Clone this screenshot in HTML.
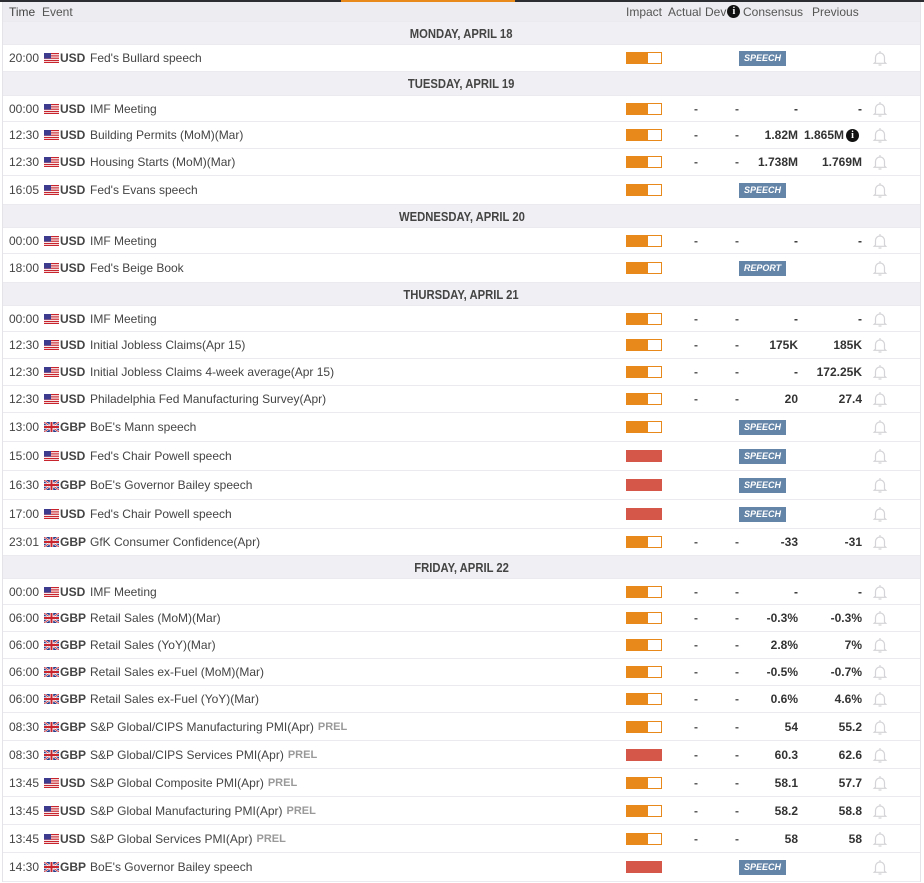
<!DOCTYPE html>
<html><head><meta charset="utf-8"><style>
*{margin:0;padding:0;box-sizing:border-box}
body{width:924px;height:883px;background:#fff;font-family:"Liberation Sans",Arial,sans-serif;font-size:12px;color:#444;position:relative;overflow:hidden}
.top{position:absolute;left:0;top:0;width:924px;height:2px;background:#2b2d33}
.top i{position:absolute;left:341px;width:174px;height:2px;background:#e8891c}
.tbl{position:absolute;left:2px;top:2px;width:919px;border-left:1px solid #e4e4e8;border-right:1px solid #e4e4e8}
.r{position:relative;border-bottom:1px solid #ebebef;background:#fff}
.r>*{position:absolute;top:0;height:100%;display:flex;align-items:center;white-space:nowrap}
.h{background:#ededf1;color:#555}
.d{background:#f0f0f4}
.d>span{left:0;width:100%;justify-content:center;font-weight:bold;color:#444;font-size:12.5px;padding-top:1px}
.d>span>em{font-style:normal;display:inline-block;transform:scaleX(.9)}
.t{left:6px;color:#444}
.f{left:41px}
.c{left:57px;font-weight:bold;color:#444}
.e{left:87px;color:#444}
.e b{color:#999;font-size:11px;margin-left:4px}
.im{left:623px}
.im i{display:block;width:36px;height:12px;border:1px solid #e8891c;background:linear-gradient(90deg,#e8891c 0 21px,#fff 21px)}
.im i.hi{background:#d5574a;border-color:#d5574a}
.a{left:688px;width:10px;justify-content:center;font-weight:bold;color:#555}
.dv{left:729px;width:10px;justify-content:center;font-weight:bold;color:#555}
.cs{right:122px;font-weight:bold;color:#333}
.pv{right:58px;font-weight:bold;color:#333}
.bl{left:869px}
.sp{left:736px}
.sp i{display:block;width:47px;height:15px;background:#6585a8;color:#fff;font-size:9px;font-weight:bold;font-style:italic;text-align:center;line-height:15px}
.inf{display:inline-block;width:13px;height:13px;border-radius:50%;background:#111;color:#fff;font-size:10px;font-weight:bold;text-align:center;line-height:13px;font-family:"Liberation Serif",serif;margin-left:2px}
</style></head><body>
<svg width="0" height="0" style="position:absolute">
<defs>
<symbol id="us" viewBox="0 0 15 10"><rect width="15" height="10" fill="#fff"/><g fill="#c8242d"><rect y="0" width="15" height="1.2"/><rect y="2.3" width="15" height="1.2"/><rect y="4.6" width="15" height="1.2"/><rect y="6.9" width="15" height="1.2"/><rect y="8.9" width="15" height="1.1"/></g><rect width="7" height="5.6" fill="#3c3b8e"/></symbol>
<symbol id="gb" viewBox="0 0 15 10"><rect width="15" height="10" fill="#243c8a"/><path d="M0 0L15 10M15 0L0 10" stroke="#fff" stroke-width="2"/><path d="M0 0L15 10M15 0L0 10" stroke="#c8242d" stroke-width=".8"/><rect x="5.8" width="3.4" height="10" fill="#fff"/><rect y="3.3" width="15" height="3.4" fill="#fff"/><rect x="6.5" width="2" height="10" fill="#c8242d"/><rect y="4" width="15" height="2" fill="#c8242d"/></symbol>
<symbol id="bell" viewBox="0 0 16 16"><path d="M8 1v1.5M3.5 12V7.5a4.5 4.5 0 0 1 9 0V12l1.3 1.3H2.2z M6.5 15h3" fill="none" stroke="#d4d4d8" stroke-width="1.2"/></symbol>
</defs></svg>
<div class="top"><i></i></div>
<div class="tbl">
<div class="r h" style="height:20px"><span class="t">Time</span><span style="left:39px">Event</span><span style="left:623px">Impact</span><span style="left:665px">Actual</span><span style="left:702px">Dev <span class="inf" style="margin-left:1px">i</span></span><span style="left:740px">Consensus</span><span style="left:809px">Previous</span></div>

<div class="r d" style="height:23px"><span><em>MONDAY, APRIL 18</em></span></div>
<div class="r" style="height:27px"><span class="t">20:00</span><span class="f"><svg width="15" height="10"><use href="#us"/></svg></span><span class="c">USD</span><span class="e">Fed's Bullard speech</span><span class="im"><i></i></span><span class="sp"><i>SPEECH</i></span><span class="bl"><svg width="16" height="16"><use href="#bell"/></svg></span></div>

<div class="r d" style="height:24px"><span><em>TUESDAY, APRIL 19</em></span></div>
<div class="r" style="height:26px"><span class="t">00:00</span><span class="f"><svg width="15" height="10"><use href="#us"/></svg></span><span class="c">USD</span><span class="e">IMF Meeting</span><span class="im"><i></i></span><span class="a">-</span><span class="dv">-</span><span class="cs">-</span><span class="pv">-</span><span class="bl"><svg width="16" height="16"><use href="#bell"/></svg></span></div>
<div class="r" style="height:27px"><span class="t">12:30</span><span class="f"><svg width="15" height="10"><use href="#us"/></svg></span><span class="c">USD</span><span class="e">Building Permits (MoM)(Mar)</span><span class="im"><i></i></span><span class="a">-</span><span class="dv">-</span><span class="cs">1.82M</span><span class="pv" style="right:61px">1.865M<span class="inf">i</span></span><span class="bl"><svg width="16" height="16"><use href="#bell"/></svg></span></div>
<div class="r" style="height:27px"><span class="t">12:30</span><span class="f"><svg width="15" height="10"><use href="#us"/></svg></span><span class="c">USD</span><span class="e">Housing Starts (MoM)(Mar)</span><span class="im"><i></i></span><span class="a">-</span><span class="dv">-</span><span class="cs">1.738M</span><span class="pv">1.769M</span><span class="bl"><svg width="16" height="16"><use href="#bell"/></svg></span></div>
<div class="r" style="height:29px"><span class="t">16:05</span><span class="f"><svg width="15" height="10"><use href="#us"/></svg></span><span class="c">USD</span><span class="e">Fed's Evans speech</span><span class="im"><i></i></span><span class="sp"><i>SPEECH</i></span><span class="bl"><svg width="16" height="16"><use href="#bell"/></svg></span></div>

<div class="r d" style="height:23px"><span><em>WEDNESDAY, APRIL 20</em></span></div>
<div class="r" style="height:26px"><span class="t">00:00</span><span class="f"><svg width="15" height="10"><use href="#us"/></svg></span><span class="c">USD</span><span class="e">IMF Meeting</span><span class="im"><i></i></span><span class="a">-</span><span class="dv">-</span><span class="cs">-</span><span class="pv">-</span><span class="bl"><svg width="16" height="16"><use href="#bell"/></svg></span></div>
<div class="r" style="height:29px"><span class="t">18:00</span><span class="f"><svg width="15" height="10"><use href="#us"/></svg></span><span class="c">USD</span><span class="e">Fed's Beige Book</span><span class="im"><i></i></span><span class="sp"><i>REPORT</i></span><span class="bl"><svg width="16" height="16"><use href="#bell"/></svg></span></div>

<div class="r d" style="height:23px"><span><em>THURSDAY, APRIL 21</em></span></div>
<div class="r" style="height:26px"><span class="t">00:00</span><span class="f"><svg width="15" height="10"><use href="#us"/></svg></span><span class="c">USD</span><span class="e">IMF Meeting</span><span class="im"><i></i></span><span class="a">-</span><span class="dv">-</span><span class="cs">-</span><span class="pv">-</span><span class="bl"><svg width="16" height="16"><use href="#bell"/></svg></span></div>
<div class="r" style="height:27px"><span class="t">12:30</span><span class="f"><svg width="15" height="10"><use href="#us"/></svg></span><span class="c">USD</span><span class="e">Initial Jobless Claims(Apr 15)</span><span class="im"><i></i></span><span class="a">-</span><span class="dv">-</span><span class="cs">175K</span><span class="pv">185K</span><span class="bl"><svg width="16" height="16"><use href="#bell"/></svg></span></div>
<div class="r" style="height:27px"><span class="t">12:30</span><span class="f"><svg width="15" height="10"><use href="#us"/></svg></span><span class="c">USD</span><span class="e">Initial Jobless Claims 4-week average(Apr 15)</span><span class="im"><i></i></span><span class="a">-</span><span class="dv">-</span><span class="cs">-</span><span class="pv">172.25K</span><span class="bl"><svg width="16" height="16"><use href="#bell"/></svg></span></div>
<div class="r" style="height:27px"><span class="t">12:30</span><span class="f"><svg width="15" height="10"><use href="#us"/></svg></span><span class="c">USD</span><span class="e">Philadelphia Fed Manufacturing Survey(Apr)</span><span class="im"><i></i></span><span class="a">-</span><span class="dv">-</span><span class="cs">20</span><span class="pv">27.4</span><span class="bl"><svg width="16" height="16"><use href="#bell"/></svg></span></div>
<div class="r" style="height:29px"><span class="t">13:00</span><span class="f"><svg width="15" height="10"><use href="#gb"/></svg></span><span class="c">GBP</span><span class="e">BoE's Mann speech</span><span class="im"><i></i></span><span class="sp"><i>SPEECH</i></span><span class="bl"><svg width="16" height="16"><use href="#bell"/></svg></span></div>
<div class="r" style="height:29px"><span class="t">15:00</span><span class="f"><svg width="15" height="10"><use href="#us"/></svg></span><span class="c">USD</span><span class="e">Fed's Chair Powell speech</span><span class="im"><i class="hi"></i></span><span class="sp"><i>SPEECH</i></span><span class="bl"><svg width="16" height="16"><use href="#bell"/></svg></span></div>
<div class="r" style="height:29px"><span class="t">16:30</span><span class="f"><svg width="15" height="10"><use href="#gb"/></svg></span><span class="c">GBP</span><span class="e">BoE's Governor Bailey speech</span><span class="im"><i class="hi"></i></span><span class="sp"><i>SPEECH</i></span><span class="bl"><svg width="16" height="16"><use href="#bell"/></svg></span></div>
<div class="r" style="height:29px"><span class="t">17:00</span><span class="f"><svg width="15" height="10"><use href="#us"/></svg></span><span class="c">USD</span><span class="e">Fed's Chair Powell speech</span><span class="im"><i class="hi"></i></span><span class="sp"><i>SPEECH</i></span><span class="bl"><svg width="16" height="16"><use href="#bell"/></svg></span></div>
<div class="r" style="height:27px"><span class="t">23:01</span><span class="f"><svg width="15" height="10"><use href="#gb"/></svg></span><span class="c">GBP</span><span class="e">GfK Consumer Confidence(Apr)</span><span class="im"><i></i></span><span class="a">-</span><span class="dv">-</span><span class="cs">-33</span><span class="pv">-31</span><span class="bl"><svg width="16" height="16"><use href="#bell"/></svg></span></div>

<div class="r d" style="height:23px"><span><em>FRIDAY, APRIL 22</em></span></div>
<div class="r" style="height:26px"><span class="t">00:00</span><span class="f"><svg width="15" height="10"><use href="#us"/></svg></span><span class="c">USD</span><span class="e">IMF Meeting</span><span class="im"><i></i></span><span class="a">-</span><span class="dv">-</span><span class="cs">-</span><span class="pv">-</span><span class="bl"><svg width="16" height="16"><use href="#bell"/></svg></span></div>
<div class="r" style="height:27px"><span class="t">06:00</span><span class="f"><svg width="15" height="10"><use href="#gb"/></svg></span><span class="c">GBP</span><span class="e">Retail Sales (MoM)(Mar)</span><span class="im"><i></i></span><span class="a">-</span><span class="dv">-</span><span class="cs">-0.3%</span><span class="pv">-0.3%</span><span class="bl"><svg width="16" height="16"><use href="#bell"/></svg></span></div>
<div class="r" style="height:27px"><span class="t">06:00</span><span class="f"><svg width="15" height="10"><use href="#gb"/></svg></span><span class="c">GBP</span><span class="e">Retail Sales (YoY)(Mar)</span><span class="im"><i></i></span><span class="a">-</span><span class="dv">-</span><span class="cs">2.8%</span><span class="pv">7%</span><span class="bl"><svg width="16" height="16"><use href="#bell"/></svg></span></div>
<div class="r" style="height:27px"><span class="t">06:00</span><span class="f"><svg width="15" height="10"><use href="#gb"/></svg></span><span class="c">GBP</span><span class="e">Retail Sales ex-Fuel (MoM)(Mar)</span><span class="im"><i></i></span><span class="a">-</span><span class="dv">-</span><span class="cs">-0.5%</span><span class="pv">-0.7%</span><span class="bl"><svg width="16" height="16"><use href="#bell"/></svg></span></div>
<div class="r" style="height:27px"><span class="t">06:00</span><span class="f"><svg width="15" height="10"><use href="#gb"/></svg></span><span class="c">GBP</span><span class="e">Retail Sales ex-Fuel (YoY)(Mar)</span><span class="im"><i></i></span><span class="a">-</span><span class="dv">-</span><span class="cs">0.6%</span><span class="pv">4.6%</span><span class="bl"><svg width="16" height="16"><use href="#bell"/></svg></span></div>
<div class="r" style="height:28px"><span class="t">08:30</span><span class="f"><svg width="15" height="10"><use href="#gb"/></svg></span><span class="c">GBP</span><span class="e">S&amp;P Global/CIPS Manufacturing PMI(Apr)<b>PREL</b></span><span class="im"><i></i></span><span class="a">-</span><span class="dv">-</span><span class="cs">54</span><span class="pv">55.2</span><span class="bl"><svg width="16" height="16"><use href="#bell"/></svg></span></div>
<div class="r" style="height:28px"><span class="t">08:30</span><span class="f"><svg width="15" height="10"><use href="#gb"/></svg></span><span class="c">GBP</span><span class="e">S&amp;P Global/CIPS Services PMI(Apr)<b>PREL</b></span><span class="im"><i class="hi"></i></span><span class="a">-</span><span class="dv">-</span><span class="cs">60.3</span><span class="pv">62.6</span><span class="bl"><svg width="16" height="16"><use href="#bell"/></svg></span></div>
<div class="r" style="height:28px"><span class="t">13:45</span><span class="f"><svg width="15" height="10"><use href="#us"/></svg></span><span class="c">USD</span><span class="e">S&amp;P Global Composite PMI(Apr)<b>PREL</b></span><span class="im"><i></i></span><span class="a">-</span><span class="dv">-</span><span class="cs">58.1</span><span class="pv">57.7</span><span class="bl"><svg width="16" height="16"><use href="#bell"/></svg></span></div>
<div class="r" style="height:28px"><span class="t">13:45</span><span class="f"><svg width="15" height="10"><use href="#us"/></svg></span><span class="c">USD</span><span class="e">S&amp;P Global Manufacturing PMI(Apr)<b>PREL</b></span><span class="im"><i></i></span><span class="a">-</span><span class="dv">-</span><span class="cs">58.2</span><span class="pv">58.8</span><span class="bl"><svg width="16" height="16"><use href="#bell"/></svg></span></div>
<div class="r" style="height:28px"><span class="t">13:45</span><span class="f"><svg width="15" height="10"><use href="#us"/></svg></span><span class="c">USD</span><span class="e">S&amp;P Global Services PMI(Apr)<b>PREL</b></span><span class="im"><i></i></span><span class="a">-</span><span class="dv">-</span><span class="cs">58</span><span class="pv">58</span><span class="bl"><svg width="16" height="16"><use href="#bell"/></svg></span></div>
<div class="r" style="height:29px"><span class="t">14:30</span><span class="f"><svg width="15" height="10"><use href="#gb"/></svg></span><span class="c">GBP</span><span class="e">BoE's Governor Bailey speech</span><span class="im"><i class="hi"></i></span><span class="sp"><i>SPEECH</i></span><span class="bl"><svg width="16" height="16"><use href="#bell"/></svg></span></div>
</div>
</body></html>
